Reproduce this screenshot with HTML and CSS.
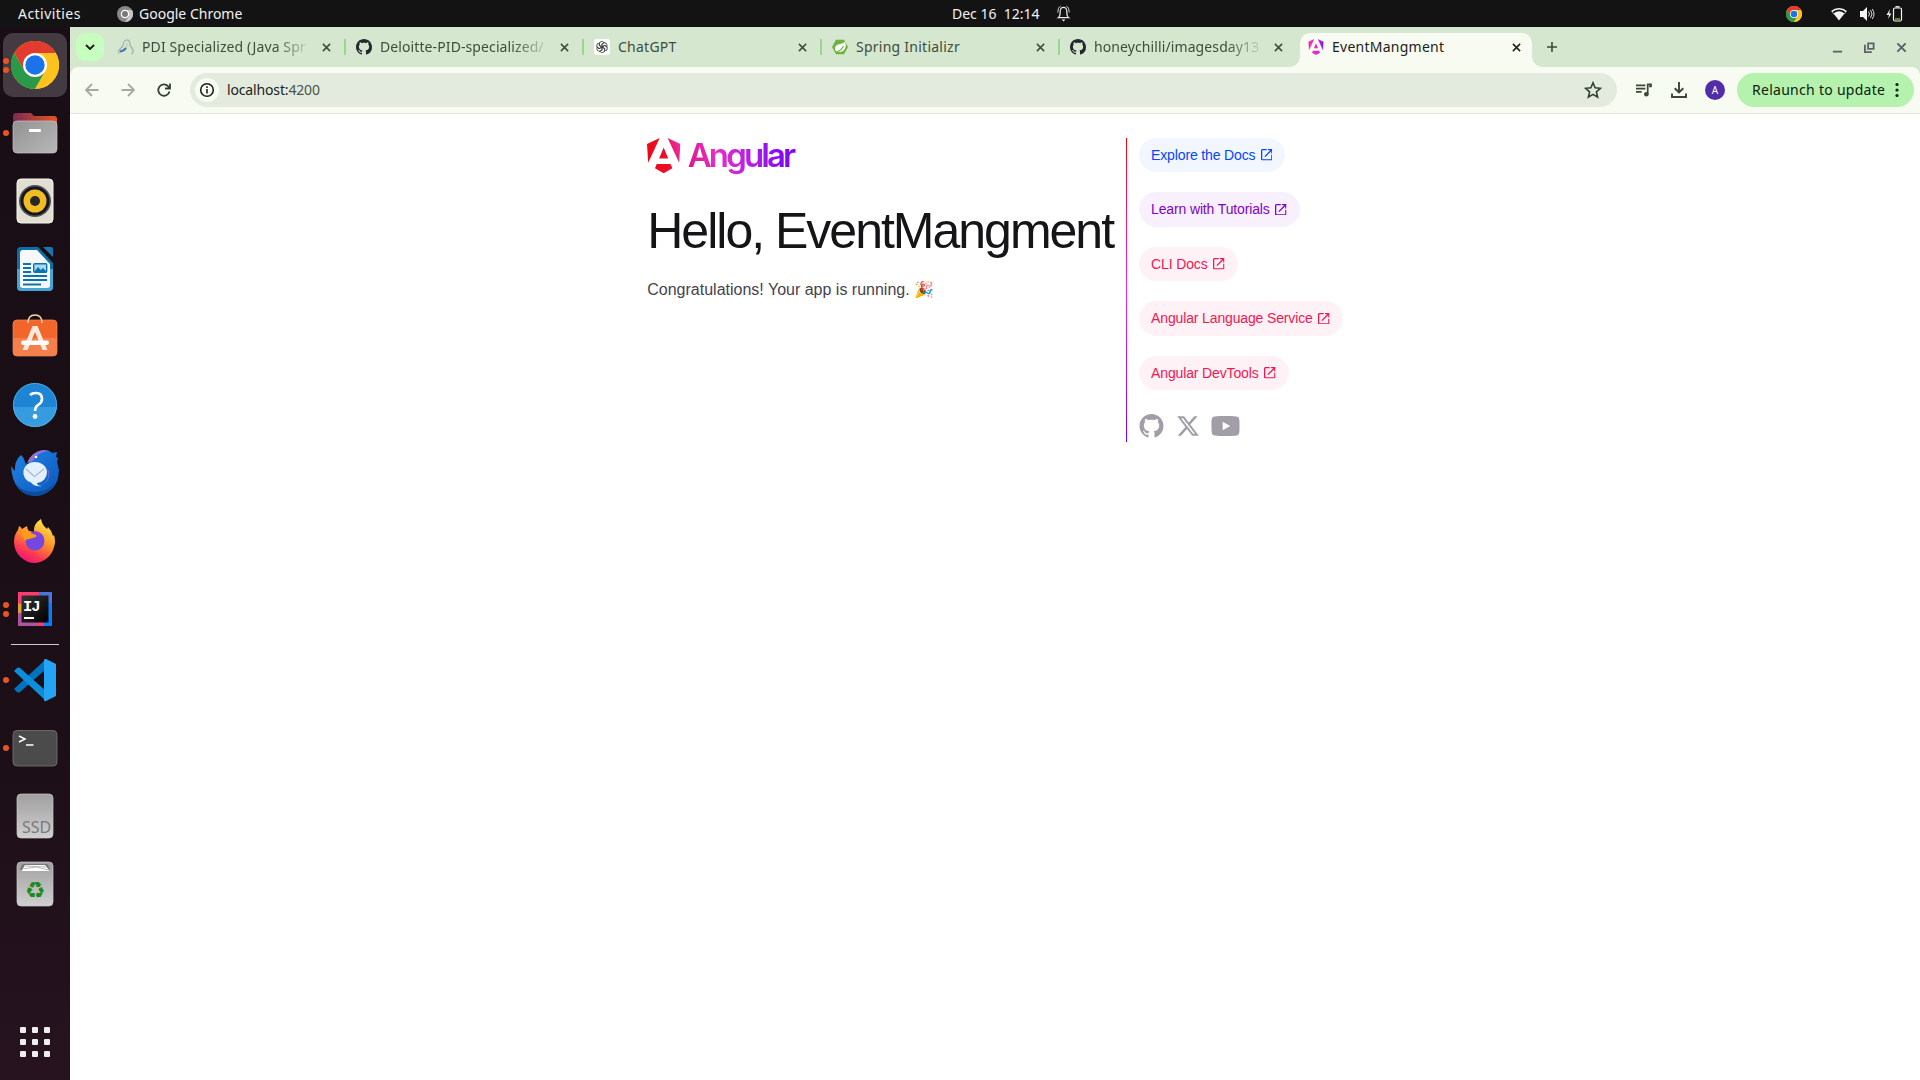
FILE: index.html
```html
<!DOCTYPE html>
<html lang="en">
<head>
<meta charset="utf-8">
<title>EventMangment</title>
<link rel="stylesheet" href="styles.css">
</head>
<body>
<svg class="defs" aria-hidden="true">
  <defs>
    <symbol id="chrome" viewBox="0 0 48 48">
      <circle cx="24" cy="24" r="24" fill="#fcc31e"/>
      <path fill="#e33b2e" d="M24 12h20.8A24 24 0 0 0 3.2 12l10.4 18z"/>
      <path fill="#2a9949" d="M13.6 30 3.2 12A24 24 0 0 0 24 48l10.4-18z"/>
      <path fill="#fcc31e" d="M24 12h20.8A24 24 0 0 1 24 48l10.4-18z"/>
      <circle cx="24" cy="24" r="12" fill="#fff"/><circle cx="24" cy="24" r="9.7" fill="#1a73e8"/>
    </symbol>
    <symbol id="github" viewBox="0 0 16 16">
      <path d="M8 0C3.58 0 0 3.58 0 8c0 3.54 2.29 6.53 5.47 7.59.4.07.55-.17.55-.38 0-.19-.01-.82-.01-1.49-2.01.37-2.53-.49-2.69-.94-.09-.23-.48-.94-.82-1.13-.28-.15-.68-.52-.01-.53.63-.01 1.08.58 1.23.82.72 1.21 1.87.87 2.33.66.07-.52.28-.87.51-1.07-1.78-.2-3.64-.89-3.64-3.95 0-.87.31-1.59.82-2.15-.08-.2-.36-1.02.08-2.12 0 0 .67-.21 2.2.82.64-.18 1.32-.27 2-.27s1.36.09 2 .27c1.53-1.04 2.2-.82 2.2-.82.44 1.1.16 1.92.08 2.12.51.56.82 1.27.82 2.15 0 3.07-1.87 3.75-3.65 3.95.29.25.54.73.54 1.48 0 1.07-.01 1.93-.01 2.2 0 .21.15.46.55.38A8.01 8.01 0 0 0 16 8c0-4.42-3.58-8-8-8z"/>
    </symbol>
    <symbol id="shield" viewBox="0 0 223 236">
      <path d="m222.077 39.192-8.125 125.923L137.387 0l84.69 39.192Zm-53.105 162.825-57.933 33.056-57.934-33.056 11.783-28.556h92.301l11.783 28.556ZM111.039 62.675l30.357 73.803H80.681l30.358-73.803ZM7.937 165.115 0 39.192 84.69 0 7.937 165.115Z"/>
    </symbol>
    <symbol id="close" viewBox="0 0 10 10"><path d="m1 1 8 8M9 1 1 9" stroke="currentColor" stroke-width="1.7"/></symbol>
    <symbol id="open" viewBox="120 -840 720 720"><path fill="currentColor" d="M200-120q-33 0-56.500-23.500T120-200v-560q0-33 23.500-56.500T200-840h280v80H200v560h560v-280h80v280q0 33-23.500 56.500T760-120H200Zm188-212-56-56 372-372H560v-80h280v280h-80v-144L388-332Z"/></symbol>
    <linearGradient id="mark" x1="0" y1=".6" x2="1" y2=".3"><stop offset="0" stop-color="#f0060b"/><stop offset=".55" stop-color="#e8102e"/><stop offset="1" stop-color="#ee2aa8"/></linearGradient>
    <linearGradient id="fav" x1="0" y1="0" x2="1" y2="0"><stop offset="0" stop-color="#f52bb5"/><stop offset=".5" stop-color="#f028c8"/><stop offset="1" stop-color="#8514f5"/></linearGradient>
    <linearGradient id="grey" x1="0" y1="0" x2="0" y2="1"><stop offset="0" stop-color="#a0a0a0"/><stop offset="1" stop-color="#cfcfcf"/></linearGradient>
    <linearGradient id="fold" x1="0" y1="0" x2="1" y2="0"><stop offset="0" stop-color="#7b2a55"/><stop offset="1" stop-color="#e95420"/></linearGradient>
    <linearGradient id="foldf" x1="0" y1="0" x2="1" y2="1"><stop offset="0" stop-color="#929292"/><stop offset="1" stop-color="#b8b8b8"/></linearGradient>
    <linearGradient id="fox" x1=".8" y1="0" x2=".3" y2="1"><stop offset="0" stop-color="#fff04f"/><stop offset=".45" stop-color="#ff9628"/><stop offset=".8" stop-color="#ff3355"/><stop offset="1" stop-color="#e3157d"/></linearGradient>
    <linearGradient id="bird" x1="0" y1="0" x2="1" y2="1"><stop offset="0" stop-color="#2186e8"/><stop offset="1" stop-color="#0b55b8"/></linearGradient>
    <linearGradient id="ij" x1="0" y1="0" x2="1" y2="1"><stop offset="0" stop-color="#333"/><stop offset="1" stop-color="#000"/></linearGradient>
  </defs>
</svg>

<header class="topbar">
  <div class="topbar-left">
    <span class="activities">Activities</span>
    <svg class="app-icon" viewBox="0 0 16 16"><circle cx="8" cy="8" r="8" fill="#888"/><path d="M8 4h7a8 8 0 0 1-7 12l4-6z" fill="#c4c4c4"/><circle cx="8" cy="8" r="3.600" fill="#777" stroke="#fff" stroke-width="1.300"/></svg>
    <span class="app-name">Google Chrome</span>
  </div>
  <div class="clock"><span class="clock-text">Dec 16&nbsp; 12:14</span>
    <svg class="bell" viewBox="0 0 16 18" fill="none" stroke="#eee"><path d="M2.500 13.500c1.500-1 2-2.500 2-7a3.500 4 0 0 1 7 0c0 4.500.5 6 2 7z" stroke-width="1.300"/><path d="M2 8C2 4 3 2 5 1.200M14 8c0-4-1-6-3-6.800" stroke-width=".9"/><path d="M6 15.500h4l-2 2z" fill="#eee" stroke="none"/></svg>
  </div>
  <div class="tray">
    <svg class="tray-chrome"><use href="#chrome"/></svg>
    <svg class="wifi" viewBox="0 0 16 14"><path d="M2.500 6.500q5.500-4.400 11 0L8 13.500z" fill="#f4f4f4"/><path d="M.6 4.600a11 11 0 0 1 14.800 0" fill="none" stroke="#f4f4f4" stroke-width="1.500"/><path d="m1.200 5 2 2.500M14.800 5l-2 2.500" stroke="#bbb" stroke-width=".8"/></svg>
    <svg class="volume" viewBox="0 0 16 16"><path d="M1 5h3l4-4v14l-4-4H1z" fill="#f4f4f4"/><path d="M9.500 5.500q2 2.500 0 5M11.500 4q3 4 0 8M13.300 3q3.400 5 0 10" fill="none" stroke="#ddd"/></svg>
    <svg class="battery" viewBox="0 0 17 16"><path d="M4 3 .5 9H3l-1 4 3.500-5.500H3.200z" fill="#f4f4f4"/><rect x="7.500" y="2" width="8" height="13" rx="1.500" fill="none" stroke="#f4f4f4" stroke-width="1.200"/><path d="M9.500.8h4" stroke="#f4f4f4" stroke-width="1.400"/><path d="M9 12h5v2H9z" fill="#4e9a06"/></svg>
  </div>
</header>

<div class="desktop">
  <nav class="dock">
    <div class="app active"><i class="dots"><b></b><b></b></i><svg viewBox="0 0 48 48"><use href="#chrome"/></svg></div>
    <div class="app"><i class="dots"><b></b></i><svg viewBox="0 0 48 48"><path d="M2 7q0-3 3-3h15l3 3h20q3 0 3 3v14H2z" fill="url(#fold)"/><rect x="2" y="12" width="44" height="32" rx="4" fill="url(#foldf)" stroke="#c4c4c4" stroke-width=".7"/><rect x="18" y="20" width="12" height="3" rx="1" fill="#fff"/></svg></div>
    <div class="app"><svg viewBox="0 0 48 48"><rect x="6" y="2" width="36" height="44" rx="4" fill="#e2ded2" stroke="#f7f5ee"/><circle cx="24" cy="24" r="16" fill="#55555c"/><circle cx="24" cy="24" r="14.500" fill="#17171f"/><circle cx="24" cy="24" r="11.500" fill="#f0bd22"/><circle cx="24" cy="24" r="5" fill="#282828"/></svg></div>
    <div class="app"><svg viewBox="0 0 48 48"><path d="M10 2h17l15 16v24q0 4-4 4H10q-4 0-4-4V6q0-4 4-4z" fill="#0d6fa8"/><path d="M6 24h36v18q0 4-4 4H10q-4 0-4-4z" fill="#45a5d4"/><path d="M12 5h14l13 14v21q0 3-3 3H12q-3 0-3-3V8q0-3 3-3z" fill="#f6f8fa"/><path d="M32 2h8q2 0 2 2v8z" fill="#1a76ad"/><g stroke="#0a74b0" stroke-width="1.800"><path d="M12 19h8M12 23h8M12 27h8M12 31h24M12 35h24M12 39.500h18"/></g><rect x="22.700" y="18.700" width="13" height="8.600" rx="1" fill="#a8d8f2" stroke="#0a74b0" stroke-width="1.400"/><path d="m23 27 4-5 3 3 2-2 4 4z" fill="#0a74b0"/></svg></div>
    <div class="app"><svg viewBox="0 0 48 48"><rect x="2" y="7" width="44" height="36" rx="4" fill="#f2652b" stroke="#f58a5c" stroke-width=".7"/><path d="M2 25h44v14q0 4-4 4H6q-4 0-4-4z" fill="#f47f4b"/><path d="M17 10q0-8 7-8t7 8" fill="none" stroke="#f0d9a8" stroke-width="1.500"/><path d="M21.500 13h5l10 24h-5L24 19l-7.500 18h-5z" fill="#fae8dc"/><rect x="10" y="27.500" width="28" height="4.500" rx="2.200" fill="#fff"/></svg></div>
    <div class="app"><svg viewBox="0 0 48 48"><circle cx="24" cy="24" r="22" fill="#1e85d4"/><path d="M2.100 26h43.800a22 22 0 0 1-43.800 0z" fill="#369bdf"/><circle cx="24" cy="24" r="21.600" fill="none" stroke="#5db6ec" stroke-width=".7"/><path d="M19 14q2-2 6-2 6 0 6 6 0 3.500-4 6-3 2-3 6" fill="none" stroke="#fff" stroke-width="2.600"/><circle cx="24" cy="35.500" r="2.400" fill="#fff"/></svg></div>
    <div class="app"><svg viewBox="0 0 48 48"><path d="M0 17Q2 20 4 22 3 12 10 6q4 4 4 8l3 1Q20 3 32 1q6-.5 9 3l5-1-1 5 2 1-1 4 2 8-1 8A24 23 0 0 1 24 47Q2 46 0 17z" fill="url(#bird)"/><path d="M16 14Q20 3 32 1l6 1q-12 1-16 10z" fill="#9271d8"/><path d="M35 18q6 13-5 18 10-3 8-14z" fill="#5a6bdc"/><path d="M4 32q5 11 20 11 12 0 20-9-7 13-20 13Q9 46 4 32z" fill="#0b4c9e"/><circle cx="25" cy="8" r="1.300" fill="#fff"/><path d="M24 13a12 10.500 0 0 1 12 10.500A10.500 10.500 0 0 1 26 34q0 3 5 3-8 1-11-3.500A11 10.500 0 0 1 24 13z" fill="#e3effb"/><path d="m15 20 8.500 7.500L33 20" fill="none" stroke="#a8b8cd" stroke-width="1.200"/></svg></div>
    <div class="app"><svg viewBox="0 0 48 48"><path d="M24 46A21 21 0 0 1 3 25q0-7 4-12l1-4q2 1 3 3l5-3q0 3 2 5l5 1Q22 7 30 2q1 6 5 9l1 1 1-2q4 4 5 9l1-1q2 7 0 12a21 21 0 0 1-19 16z" fill="url(#fox)"/><circle cx="24" cy="24" r="9.500" fill="#7547dc"/><path d="M9 17q5-5 13 0 5 1 3 3l-7 2q-3 0-4 2-2-5-5-7z" fill="#ff9a18"/><path d="M22 14q8-1 12 8-3-5-6-4z" fill="#a23fd2"/></svg></div>
    <div class="app"><i class="dots"><b></b><b></b></i><svg viewBox="0 0 48 48"><path d="M7 7h34v34H7z" fill="#087cfa"/><path d="M7 7h21l5 34H7z" fill="#fc3b73"/><path d="m7 18 6 2-1 12-5-4z" fill="#e49b34"/><path d="M7 28h20v13H7z" fill="#ac559e"/><path d="M28 7h13v12l-7-4z" fill="#4b73dc"/><path d="M10.500 10.500h27v27h-27z" fill="url(#ij)"/><path d="M13 33h10" stroke="#fff" stroke-width="2"/><text x="12" y="25.500" class="ij-text">IJ</text></svg></div>
    <hr class="dock-rule">
    <div class="app"><i class="dots"><b></b></i><svg viewBox="0 0 48 48"><path d="m3 33 3 3q2 1 3 0l26-23V3z" fill="#0073bf"/><path d="m3 15 3-3q2-1 3 0l26 23v10z" fill="#0b8fdb"/><path d="M33 4q.5-1.500 2-1l10 5v32l-10 5q-2 .5-2-1z" fill="#26a4f4"/></svg></div>
    <div class="app"><i class="dots"><b></b></i><svg viewBox="0 0 48 48"><rect x="2" y="6.500" width="44" height="35.500" rx="4" fill="#4b4b4b" stroke="#777" stroke-width=".8"/><path d="m8 12 6 3-6 3M15 21h7.500" fill="none" stroke="#fff" stroke-width="1.500"/></svg></div>
    <div class="app"><svg viewBox="0 0 48 48"><rect x="6" y="2" width="36" height="44" rx="4" fill="url(#grey)" stroke="#ccc" stroke-width=".7"/><text x="11" y="41" class="ssd-text">SSD</text></svg></div>
    <div class="app"><svg viewBox="0 0 48 48"><rect x="6" y="2" width="36" height="44" rx="4" fill="url(#grey)" stroke="#ccc" stroke-width=".7"/><path d="M9 10q1-5 3-6h24q2 1 3 6z" fill="#777"/><path d="m11 10 3-5h20l4 5v1H11z" fill="#fff"/><path d="m14 6 21 1M11 9l14-2 13 3" stroke="#aaa" stroke-width=".8" fill="none"/><text x="24" y="37.500" text-anchor="middle" class="recycle-text">♻</text></svg></div>
    <div class="apps-grid"><b></b><b></b><b></b><b></b><b></b><b></b><b></b><b></b><b></b></div>
  </nav>

  <section class="window">
    <div class="tabstrip">
      <div class="tab-search"><svg viewBox="0 0 10 6"><path d="m1 1 4 4 4-4" fill="none" stroke="#16210f" stroke-width="1.900"/></svg></div>
      <div class="tab"><svg class="fav" viewBox="0 0 16 16" fill="none"><path d="M.8 14.500v-3l4-4.500Q5.500 1 9 1q3 0 3 5l3 5q.5 2.500-1.500 4" stroke="#a3aaa6" stroke-width="1.200"/><path d="M.8 11.500q5 0 8-3.500V4" stroke="#b3bab4" stroke-width=".9"/><path d="M2 12.500q4-.5 6-3.500" stroke="#3577ad" stroke-width="2"/></svg><span class="title fade">PDI Specialized (Java Spr</span><svg class="x"><use href="#close"/></svg></div>
      <div class="tab"><svg class="fav dark"><use href="#github"/></svg><span class="title fade">Deloitte-PID-specialized/</span><svg class="x"><use href="#close"/></svg></div>
      <div class="tab"><svg class="fav" viewBox="0 0 16 16"><rect width="16" height="16" rx="3" fill="#fff"/><g fill="none" stroke="#444" stroke-width=".9"><path id="petal" d="M5.300 6.400V4.600a2.600 2.600 0 0 1 4.400-1.400M5.300 6.400 8 8l0-3.100 2.700-1.500"/><use href="#petal" transform="rotate(60 8 8)"/><use href="#petal" transform="rotate(120 8 8)"/><use href="#petal" transform="rotate(180 8 8)"/><use href="#petal" transform="rotate(240 8 8)"/><use href="#petal" transform="rotate(300 8 8)"/></g></svg><span class="title">ChatGPT</span><svg class="x"><use href="#close"/></svg></div>
      <div class="tab"><svg class="fav" viewBox="0 0 16 16"><path d="M4 .8h8L16 8l-4 7.200H4L0 8z" fill="#6db33f"/><path d="M13.200 2.800q-2 2-6 2.400Q3 6 3 9.500q0 2 1.500 3.200 3 1 6.500-.7 4-3 2.200-9.200z" fill="#fff"/><path d="M3.500 13.500Q9 12 11.500 7" fill="none" stroke="#6db33f" stroke-width="1.200"/></svg><span class="title">Spring Initializr</span><svg class="x"><use href="#close"/></svg></div>
      <div class="tab"><svg class="fav dark"><use href="#github"/></svg><span class="title fade">honeychilli/imagesday13</span><svg class="x"><use href="#close"/></svg></div>
      <div class="tab current"><svg class="fav" fill="url(#fav)"><use href="#shield"/></svg><span class="title">EventMangment</span><svg class="x"><use href="#close"/></svg></div>
      <svg class="new-tab" viewBox="0 0 12 12"><path d="M6 1v10M1 6h10" stroke="#3c4a3a" stroke-width="1.600"/></svg>
      <div class="window-buttons">
        <svg viewBox="0 0 12 12"><path d="M1 10.500h10" stroke-width="2"/></svg>
        <svg viewBox="0 0 12 12"><path d="M4.500 1.500h6v6h-6z" stroke-width="2"/><path d="M1 3v8h7.500" stroke-width="2"/></svg>
        <svg viewBox="0 0 12 12"><path d="m1.500 1.500 9 9m0-9-9 9" stroke-width="2.200"/></svg>
      </div>
    </div>
    <div class="toolbar">
      <div class="nav-icons">
        <svg class="dim" viewBox="0 0 16 16"><path d="M14.500 8H2.500M8 2 2 8l6 6"/></svg>
        <svg class="dim" viewBox="0 0 16 16"><path d="M1.500 8h12M8 2l6 6-6 6"/></svg>
        <svg viewBox="0 0 16 16"><path d="M13.500 9.500a5.700 5.700 0 1 1-1.300-5.200L13.600 6M14 1.500v5H9"/></svg>
      </div>
      <div class="omnibox">
        <span class="site-info"><svg viewBox="0 0 16 16"><circle cx="8" cy="8" r="6.300" fill="none" stroke="#1c221a" stroke-width="1.600"/><path d="M8 7v4.500M8 4.300v1.700" stroke="#1c221a" stroke-width="1.600"/></svg></span>
        <span class="url">localhost:<em>4200</em></span>
        <svg class="star" viewBox="0 0 18 18"><path d="m9 1.800 2.100 5 5.400.5-4.100 3.600 1.200 5.300L9 13.400l-4.600 2.800 1.200-5.300-4.100-3.600 5.400-.5z"/></svg>
      </div>
      <svg class="media" viewBox="0 0 18 16"><path d="M1 2.500h10M1 6h10M1 9.500h6" stroke="#3a4638" stroke-width="1.700"/><path d="M13.500 12V1.500H17v2h-2" fill="none" stroke="#3a4638" stroke-width="1.800"/><circle cx="12" cy="12" r="2.400" fill="#3a4638"/></svg>
      <svg class="download" viewBox="0 0 16 16"><path d="M8 0v10M3.700 6.300 8 10.500l4.300-4.200M1 11.500V15h14v-3.500" fill="none" stroke="#3a4638" stroke-width="1.900"/></svg>
      <span class="avatar">A</span>
      <div class="relaunch"><span>Relaunch to update</span><svg viewBox="0 0 4 16" fill="#10200e"><circle cx="2" cy="2.500" r="1.600"/><circle cx="2" cy="8" r="1.600"/><circle cx="2" cy="13.500" r="1.600"/></svg></div>
    </div>

    <main class="page">
      <div class="content">
        <div class="left-side">
          <div class="logo"><svg class="logo-mark" fill="url(#mark)"><use href="#shield"/></svg><span class="wordmark">Angular</span></div>
          <h1>Hello, EventMangment</h1>
          <p>Congratulations! Your app is running. 🎉</p>
        </div>
        <div class="divider"></div>
        <div class="right-side">
          <div class="pill-group">
            <a class="pill blue"><span>Explore the Docs</span><svg><use href="#open"/></svg></a>
            <a class="pill violet"><span>Learn with Tutorials</span><svg><use href="#open"/></svg></a>
            <a class="pill red"><span>CLI Docs</span><svg><use href="#open"/></svg></a>
            <a class="pill red"><span>Angular Language Service</span><svg><use href="#open"/></svg></a>
            <a class="pill red"><span>Angular DevTools</span><svg><use href="#open"/></svg></a>
          </div>
          <div class="social-links">
            <svg class="gh"><use href="#github"/></svg>
            <svg class="tw" viewBox="0 0 24 24"><path d="M18.244 2.250h3.308l-7.227 8.260 8.502 11.240H16.170l-5.214-6.817L4.990 21.750H1.680l7.730-8.835L1.254 2.250H8.080l4.713 6.231zm-1.161 17.520h1.833L7.084 4.126H5.117z"/></svg>
            <svg class="yt" viewBox="0 0 29 20"><path fill-rule="evenodd" d="M27.490 1.520c.93.930 1.010 2.900 1.010 8.480s-.08 7.550-1.010 8.480c-1 1.020-2.400 1.520-12.990 1.520S2.510 19.500 1.510 18.480C.58 17.550.5 15.580.5 10s.08-7.550 1.010-8.480C2.510.5 3.910 0 14.500 0s11.990.5 12.990 1.520ZM19.250 10 11.700 5.800v8.400z"/></svg>
          </div>
        </div>
      </div>
    </main>
  </section>
</div>
</body>
</html>
```
FILE: styles.css
```css
* { box-sizing: border-box; }
body { margin: 0; height: 1080px; overflow: hidden; display: flex; flex-direction: column; font-family: "Noto Sans", sans-serif; }
svg { display: block; flex: none; }
.defs { position: absolute; width: 0; height: 0; }

.topbar { height: 27px; flex: none; background: #131313; color: #f2f2f2; display: grid; grid-template-columns: 1fr auto 1fr; align-items: center; font-size: 14px; line-height: 27px; }
.topbar-left { display: flex; align-items: center; padding-left: 18px; }
.activities { width: 99px; letter-spacing: .45px; }
.app-icon { width: 16px; height: 16px; margin-right: 6px; }
.clock { display: flex; align-items: center; gap: 16px; padding-left: 103px; }
.clock-text { width: 88px; white-space: nowrap; }
.bell { width: 15px; height: 17px; }
.tray { display: flex; align-items: center; justify-content: flex-end; padding-right: 17px; }
.tray-chrome { width: 16px; height: 16px; margin-right: 29px; }
.wifi { width: 16px; height: 14px; margin-right: 12px; }
.volume { width: 16px; height: 16px; margin-right: 11px; }
.battery { width: 17px; height: 16px; }

.desktop { flex: 1; display: flex; min-height: 0; }
.dock { width: 70px; flex: none; display: flex; flex-direction: column; align-items: center; padding-top: 6px; background: linear-gradient(#190e15, #1c0f17 70%, #26131f); }
.app { width: 64px; height: 64px; margin-bottom: 4px; border-radius: 10px; display: grid; place-items: center; position: relative; }
.app.active { background: #443b42; }
.app > svg { width: 48px; height: 48px; }
.dots { position: absolute; left: 0; top: 0; height: 64px; display: flex; flex-direction: column; gap: 3px; justify-content: center; }
.dots b { width: 6px; height: 6px; border-radius: 50%; background: #e95420; }
.dock-rule { width: 48px; height: 1px; border: 0; margin: -1px 0 3px; background: #cfcacd; }
.ij-text { font: bold 15.500px "Liberation Mono", monospace; fill: #fff; letter-spacing: -1px; }
.ssd-text { font: 16px "Noto Sans", sans-serif; fill: #7a7a7a; }
.recycle-text { font: 23px "DejaVu Sans", sans-serif; fill: #1c8a1c; }
.apps-grid { margin-top: auto; margin-bottom: 23px; display: grid; grid-template-columns: repeat(3, 6px); gap: 6px; }
.apps-grid b { height: 6px; border-radius: 1px; background: #eee; }

.window { flex: 1; min-width: 0; display: flex; flex-direction: column; background: #fff; }
.tabstrip { height: 40px; flex: none; display: flex; align-items: center; padding: 0 6px; background: #d5e7cf; color: #3f4d3c; }
.tab-search { width: 28px; height: 28px; border-radius: 9px; background: #c7fdbf; display: grid; place-items: center; margin-right: 3px; }
.tab-search svg { width: 10px; height: 6px; }
.tab { width: 238px; height: 34px; padding: 0 12px 6px 11px; margin-top: 6px; display: flex; align-items: center; position: relative; }
.tab:not(.current)::after { content: ""; position: absolute; right: -1px; top: 6px; width: 2px; height: 16px; background: #9bd591; }
.tab:nth-child(6)::after { display: none; }
.fav { width: 16px; height: 16px; margin-right: 8px; }
.dark { fill: #24292f; }
.title { flex: 1; min-width: 0; white-space: nowrap; font-size: 14px; letter-spacing: .25px; line-height: 20px; margin-right: 10px; }
.fade { mask-image: linear-gradient(90deg, #000 78%, transparent); letter-spacing: .1px; }
.x { width: 9px; height: 9px; margin-right: 2px; }
.tab.current { background: #f8fbf1; color: #1c221a; border-radius: 10px 10px 0 0; width: 232px; margin-left: 3px; padding: 0 9px 6px 8px; }
.tab.current::before, .tab.current::after { content: ""; position: absolute; bottom: 0; width: 10px; height: 10px; }
.tab.current::before { left: -10px; background: radial-gradient(circle at 0 0, #d5e7cf 9.500px, #f8fbf1 10px); }
.tab.current::after { right: -10px; background: radial-gradient(circle at 100% 0, #d5e7cf 9.500px, #f8fbf1 10px); }
.new-tab { width: 12px; height: 12px; margin-left: 14px; }
.window-buttons { margin-left: auto; display: flex; gap: 21px; padding-right: 7px; }
.window-buttons svg { width: 11px; height: 11px; fill: none; stroke: #5f6368; }

.toolbar { height: 47px; flex: none; display: flex; align-items: center; padding: 0 6px 0 14px; background: radial-gradient(circle at 8px 8px, #f8fbf1 7.500px, #d5e7cf 8px) 0 0 / 8px 8px no-repeat, radial-gradient(circle at 0 8px, #f8fbf1 7.500px, #d5e7cf 8px) 100% 0 / 8px 8px no-repeat, #f8fbf1; border-bottom: 1px solid #dfe5da; color: #1c221a; font-size: 14px; }
.nav-icons { display: flex; gap: 20px; width: 106px; }
.nav-icons svg { width: 16px; height: 16px; fill: none; stroke: #33402f; stroke-width: 1.800; }
.nav-icons .dim { stroke: #a3aa9f; }
.omnibox { flex: 1; height: 34px; border-radius: 17px; background: #e3ebdf; display: flex; align-items: center; padding: 0 15px 0 5px; }
.site-info { width: 24px; height: 24px; border-radius: 50%; background: #f8fbf1; display: grid; place-items: center; margin-right: 8px; }
.site-info svg { width: 16px; height: 16px; }
.url { flex: 1; letter-spacing: -.15px; padding-bottom: 2px; }
.url em { font-style: normal; color: #4a5547; }
.star { width: 18px; height: 18px; fill: none; stroke: #33402f; stroke-width: 1.600; }
.media { width: 17px; height: 15px; margin-left: 18px; }
.download { width: 16px; height: 16px; margin-left: 19px; }
.avatar { width: 20px; height: 20px; margin-left: 18px; border-radius: 50%; background: #512da8; color: #fff; font-size: 10px; line-height: 20px; text-align: center; }
.relaunch { margin-left: 12px; width: 177px; height: 34px; border-radius: 17px; background: #b4f2ae; color: #10200e; display: flex; align-items: center; justify-content: space-between; padding: 0 15px; white-space: nowrap; }
.relaunch span { letter-spacing: .28px; padding-bottom: 2px; }
.relaunch svg { width: 4px; height: 16px; }

.page { flex: 1; display: flex; justify-content: center; align-items: flex-start; padding: 24px; font-family: "Liberation Sans", sans-serif; }
.content { width: 700px; display: flex; justify-content: space-around; }
.logo { display: flex; height: 40px; align-items: flex-start; }
.logo-mark { width: 33.500px; height: 35.500px; }
.wordmark { font: 600 33px/34px Inter, sans-serif; letter-spacing: -2.900px; margin: 0 0 0 7px; padding: 0 4px 4px 0; background: linear-gradient(75deg, #d9177e, #e82cc8 28%, #c022e0 50%, #8a0cf5 80%, #7702ff); background-clip: text; -webkit-background-clip: text; color: transparent; height: 40px; }
h1 { margin: 28px 0 0; font-size: 50px; line-height: 100%; font-weight: 500; letter-spacing: -2px; color: #151417; white-space: nowrap; }
p { margin: 24px 0 0; font-size: 16px; line-height: normal; color: #46434b; }
.divider { width: 1px; margin: 0 8px; background: linear-gradient(180deg, #f0060b, #f0070c 1%, #e92ae0 50%, #7702ff); }
.pill-group { display: flex; flex-direction: column; align-items: flex-start; gap: 20px; }
.pill { display: flex; align-items: center; padding: 6px 12px; border-radius: 44px; font-size: 14px; line-height: 22.400px; letter-spacing: -.14px; }
.pill svg { width: 11.500px; height: 11.500px; margin: 0 1px 0 5.500px; }
.blue { color: #0546ff; background: #f2f6ff; }
.violet { color: #8001c6; background: #f8f1fd; }
.red { color: #f11653; background: #fef2f6; }
.social-links { display: flex; align-items: center; gap: 11.700px; margin: 24px 0 4px; fill: #a19ea8; }
.gh { width: 25px; height: 24px; }
.tw { width: 24px; height: 24px; }
.yt { width: 29px; height: 20px; }
```
